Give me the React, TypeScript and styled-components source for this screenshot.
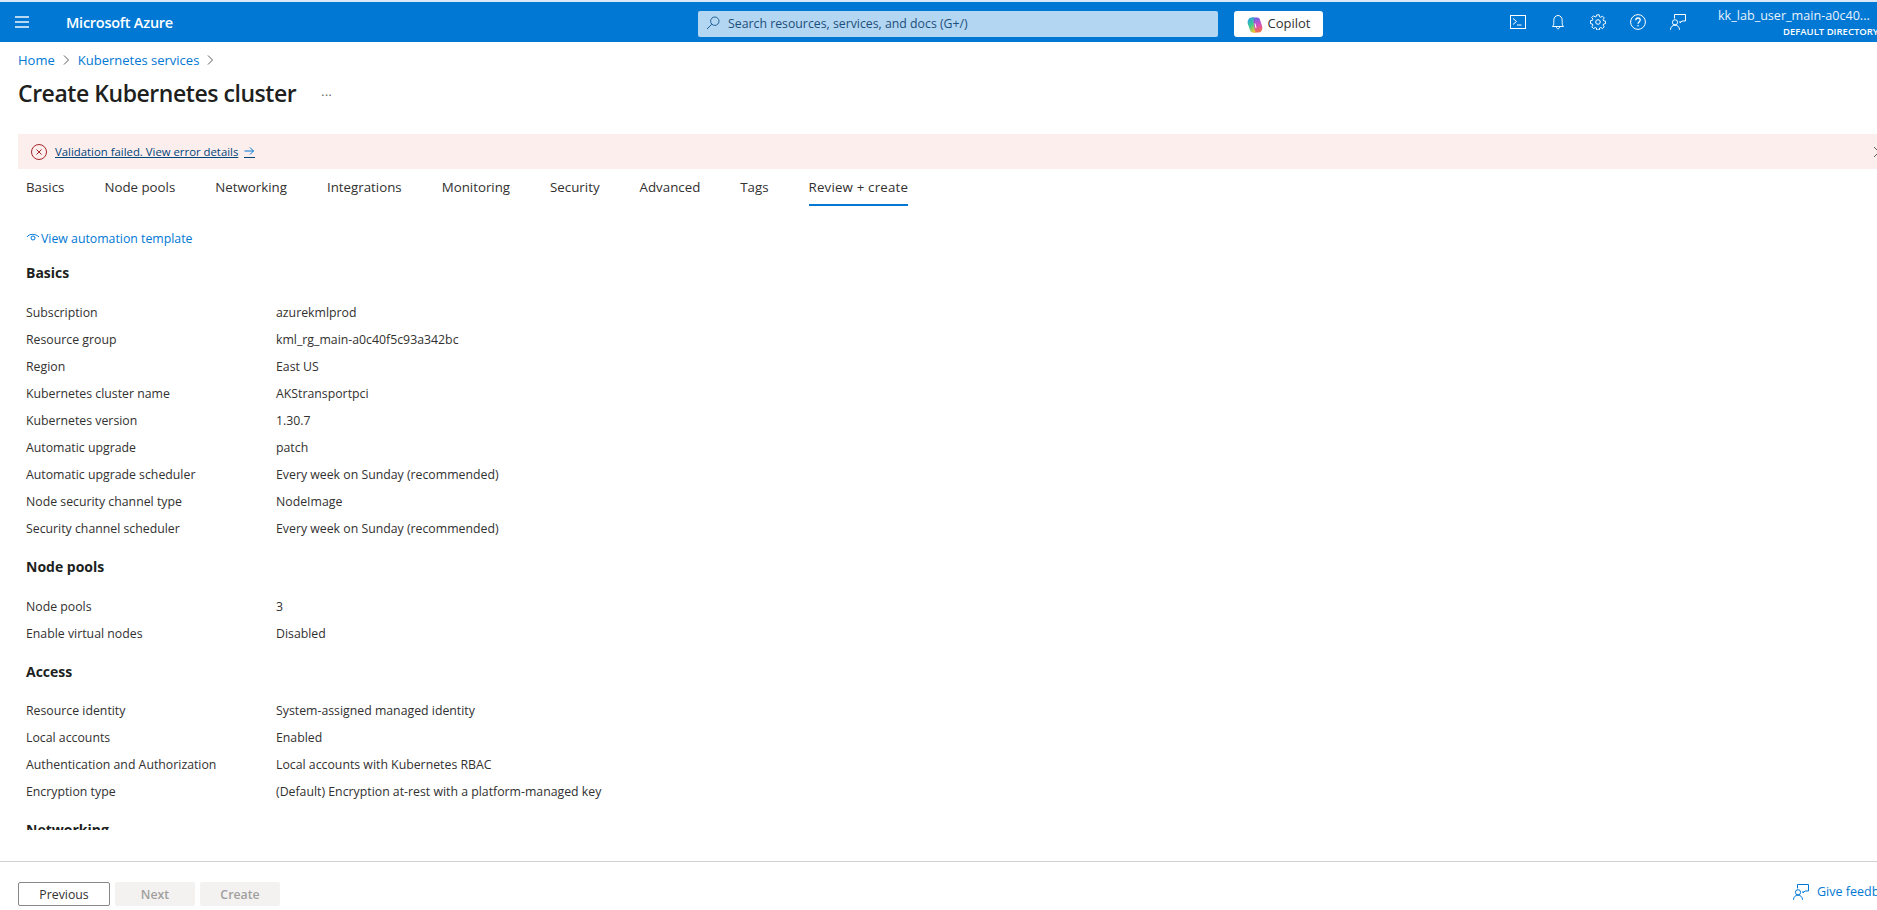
import React from "react";
import styled, { createGlobalStyle } from "styled-components";

const Global = createGlobalStyle`
  html, body { margin: 0; padding: 0; height: 910px; overflow: hidden; background: #fff; }
  body { font-family: "Open Sans", "Noto Sans", sans-serif; color: #323130; font-size: 12.3px; }
  a { text-decoration: none; }
`;

const Page = styled.div`
  width: 1900px;
  height: 910px;
  display: flex;
  flex-direction: column;
  overflow: hidden;
  border-top: 2px solid #dbe9f6;
  box-sizing: border-box;
`;

const TopBar = styled.header`
  height: 40px;
  flex: none;
  background: #0078d4;
  display: flex;
  align-items: center;
  color: #fff;
`;
const MenuButton = styled.div`
  width: 14px;
  margin-left: 15px;
  display: flex;
  flex-direction: column;
  gap: 3px;
  & > i { display: block; height: 2px; background: #b7d8f3; }
`;
const Brand = styled.div`
  margin-left: 37px;
  width: 632px;
  font-size: 14.5px;
  font-weight: 600;
  letter-spacing: -0.25px;
`;
const SearchBox = styled.div`
  width: 520px;
  height: 26px;
  margin-top: 4px;
  padding: 0 0 2px 8px;
  border-radius: 2px;
  background: #b3d6f2;
  display: flex;
  align-items: center;
  gap: 8px;
  box-sizing: border-box;
  color: #1d4f7c;
  font-size: 12.3px;
`;
const CopilotButton = styled.div`
  width: 89px;
  height: 26px;
  margin: 4px 0 0 16px;
  padding-bottom: 2px;
  box-sizing: border-box;
  border-radius: 3px;
  background: #fff;
  color: #323130;
  display: flex;
  align-items: center;
  justify-content: center;
  gap: 5px;
  font-size: 13px;
  font-weight: 500;
`;
const CopilotIcon = styled.svg`
  margin-top: 3px;
`;
const IconRow = styled.div`
  margin-left: 187px;
  display: flex;
  gap: 24px;
  align-items: center;
`;
const Account = styled.div`
  position: relative;
  margin-left: 32px;
  width: 170px;
  height: 40px;
`;
const AccountName = styled.div`
  position: absolute;
  left: 0;
  top: 5px;
  font-size: 12.6px;
  color: #e8f3fc;
  white-space: nowrap;
`;
const AccountDir = styled.div`
  position: absolute;
  left: 65px;
  top: 23px;
  font-size: 9.5px;
  font-weight: 600;
  white-space: nowrap;
`;

const Breadcrumb = styled.nav`
  margin: 10px 0 0 18px;
  height: 16px;
  display: flex;
  align-items: center;
  gap: 8px;
  font-size: 13px;
`;
const Crumb = styled.a`
  color: #0078d4;
`;
const TitleRow = styled.div`
  margin: 7px 0 0 18px;
  height: 36px;
  display: flex;
  align-items: center;
  position: relative;
`;
const Title = styled.h1`
  margin: 0;
  font-size: 23px;
  font-weight: 600;
  color: #201f1e;
  letter-spacing: -0.45px;
`;
const More = styled.span`
  margin-left: 25px;
  font-size: 12px;
  color: #605e5c;
  letter-spacing: 0.5px;
  position: relative;
  top: -2px;
`;
const EdgeMark = styled.svg`
  position: absolute;
  left: 1858px;
  top: 10px;
`;
const Banner = styled.div`
  margin: 23px 0 0 18px;
  height: 35px;
  flex: none;
  background: #fdeeee;
  display: flex;
  align-items: center;
  gap: 8px;
  padding-left: 13px;
  position: relative;
`;
const BannerLink = styled.a`
  color: #004578;
  text-decoration: underline;
  font-size: 11.35px;
  display: flex;
  align-items: center;
  gap: 6px;
`;
const BannerClose = styled.svg`
  position: absolute;
  left: 1855px;
  top: 12px;
`;
const Tabs = styled.div`
  margin: 0 0 0 26px;
  height: 37px;
  flex: none;
  display: flex;
  gap: 40px;
`;
const Tab = styled.div<{ $active?: boolean }>`
  height: 37px;
  box-sizing: border-box;
  padding-top: 9px;
  font-size: 13.3px;
  white-space: nowrap;
  font-weight: ${(p) => (p.$active ? 500 : 400)};
  letter-spacing: ${(p) => (p.$active ? "0.18px" : "normal")};
  color: #323130;
  border-bottom: 2px solid ${(p) => (p.$active ? "#0078d4" : "transparent")};
`;
const Body = styled.main`
  height: 624px;
  flex: none;
  overflow: hidden;
  padding: 23px 0 0 26px;
  box-sizing: border-box;
`;
const TemplateLink = styled.a`
  color: #0078d4;
  font-size: 12.3px;
  display: flex;
  align-items: center;
  gap: 1px;
  height: 18px;
  margin-bottom: 17px;
`;
const Heading = styled.h2`
  margin: 0;
  height: 18px;
  line-height: 18px;
  font-size: 14px;
  font-weight: 700;
  color: #201f1e;
`;
const Section = styled.section`
  margin-bottom: 16px;
`;
const Rows = styled.dl`
  margin: 16.8px 0 0;
  display: grid;
  grid-template-columns: 250px 1fr;
  grid-auto-rows: 27px;
  align-items: center;
  font-size: 12.3px;
  & > dt, & > dd { margin: 0; }
`;
const Footer = styled.footer`
  flex: 1;
  margin-top: 31px;
  border-top: 1px solid #d2d0ce;
  display: flex;
  align-items: flex-start;
  padding: 20px 0 0 18px;
  gap: 5px;
  position: relative;
`;
const Button = styled.div<{ $primary?: boolean }>`
  width: ${(p) => (p.$primary ? 92 : 80)}px;
  height: 24px;
  box-sizing: border-box;
  border-radius: 2px;
  display: flex;
  align-items: center;
  justify-content: center;
  font-size: 12.3px;
  font-weight: ${(p) => (p.$primary ? 500 : 600)};
  color: ${(p) => (p.$primary ? "#323130" : "#a19f9d")};
  background: ${(p) => (p.$primary ? "#fff" : "#f3f2f1")};
  border: ${(p) => (p.$primary ? "1px solid #8a8886" : "none")};
`;
const Feedback = styled.a`
  position: absolute;
  left: 1793px;
  top: 21px;
  color: #0078d4;
  display: flex;
  align-items: center;
  gap: 8px;
  font-size: 12.5px;
  white-space: nowrap;
`;

const FeedbackIcon = ({ color, size = 16 }: { color: string; size?: number }) => (
  <svg width={size} height={size} viewBox="0 0 16 16" fill="none" stroke={color} strokeWidth="1">
    <path d="M4.5 4.5V.5h11v6.5h-3.5l-2 2V7" />
    <circle cx="5" cy="8.3" r="2.6" />
    <path d="M.5 15.8c0-3 2-4.6 4.5-4.6s4.5 1.6 4.5 4.6" />
  </svg>
);

const sections = [
  ["Basics", [
    ["Subscription", "azurekmlprod"],
    ["Resource group", "kml_rg_main-a0c40f5c93a342bc"],
    ["Region", "East US"],
    ["Kubernetes cluster name", "AKStransportpci"],
    ["Kubernetes version", "1.30.7"],
    ["Automatic upgrade", "patch"],
    ["Automatic upgrade scheduler", "Every week on Sunday (recommended)"],
    ["Node security channel type", "NodeImage"],
    ["Security channel scheduler", "Every week on Sunday (recommended)"],
  ]],
  ["Node pools", [
    ["Node pools", "3"],
    ["Enable virtual nodes", "Disabled"],
  ]],
  ["Access", [
    ["Resource identity", "System-assigned managed identity"],
    ["Local accounts", "Enabled"],
    ["Authentication and Authorization", "Local accounts with Kubernetes RBAC"],
    ["Encryption type", "(Default) Encryption at-rest with a platform-managed key"],
  ]],
  ["Networking", []],
] as [string, string[][]][];

const tabs = ["Basics", "Node pools", "Networking", "Integrations", "Monitoring", "Security", "Advanced", "Tags"];

const Chevron = () => (
  <svg width="7" height="10" viewBox="0 0 7 10" fill="none" stroke="#605e5c" strokeWidth="1">
    <path d="M1 .5 5.500 5 1 9.500" />
  </svg>
);

export default function App() {
  return (
    <Page>
      <Global />
      <TopBar>
        <MenuButton><i /><i /><i /></MenuButton>
        <Brand>Microsoft Azure</Brand>
        <SearchBox>
          <svg width="14" height="14" viewBox="0 0 14 14" fill="none" stroke="#1d5f96" strokeWidth="1">
            <circle cx="8.800" cy="5.200" r="4.200" />
            <path d="M5.800 8.200 1 13" />
          </svg>
          Search resources, services, and docs (G+/)
        </SearchBox>
        <CopilotButton>
          <CopilotIcon width="16" height="16" viewBox="0 0 16 16">
            <defs>
              <linearGradient id="cpA" x1="0.2" y1="0" x2="0.7" y2="1">
                <stop offset="0" stopColor="#2b9fe6" />
                <stop offset="0.5" stopColor="#3ecb8f" />
                <stop offset="1" stopColor="#f6c92e" />
              </linearGradient>
              <linearGradient id="cpB" x1="0.4" y1="0" x2="0.6" y2="1">
                <stop offset="0" stopColor="#6a63e6" />
                <stop offset="0.5" stopColor="#d24fc4" />
                <stop offset="1" stopColor="#f4743f" />
              </linearGradient>
            </defs>
            <path d="M5 .6h5.100c1.500 0 2.400.9 2.900 2.100l2.100 6.200c.9 3-.8 6.500-3.600 6.500H6z" fill="url(#cpB)" />
            <path d="M9 15.400H5.900c-1.500 0-2.400-.9-2.900-2.100L.9 7.100C0 4.100 1.700.6 4.500.6h2.900C6.500 2 6.300 3.500 6.600 5.100l.9 6.700c.2 1.600.6 2.800 1.500 3.600z" fill="url(#cpA)" />
            <path d="M8 6.500 9 11" stroke="#fff" strokeWidth="1" fill="none" />
          </CopilotIcon>
          Copilot
        </CopilotButton>
        <IconRow>
          <svg width="16" height="16" viewBox="0 0 16 16" fill="none" stroke="#fff" strokeWidth="1">
            <rect x=".5" y="1.500" width="15" height="13" />
            <path d="M3 4.500 6.500 7.500 3 10.500M7 11h4.500" />
          </svg>
          <svg width="16" height="16" viewBox="0 0 16 16" fill="none" stroke="#fff" strokeWidth="1">
            <path d="M2.500 12.500c1-1 1.300-2 1.300-4V6.500C3.800 3.600 5.500 1.500 8 1.500s4.200 2.100 4.200 5v2c0 2 .3 3 1.300 4z" />
            <path d="M6.500 13c0 1 .6 1.800 1.500 1.800S9.500 14 9.500 13" />
          </svg>
          <svg width="16" height="16" viewBox="0 0 16 16" fill="none" stroke="#fff" strokeWidth="1">
            <circle cx="8" cy="8" r="2.300" />
            <path d="M6.800.8h2.400l.4 2 1.200.5 1.700-1.100 1.700 1.700-1.100 1.700.5 1.200 2 .4v2.400l-2 .4-.5 1.200 1.100 1.700-1.700 1.700-1.700-1.100-1.200.5-.4 2H6.800l-.4-2-1.200-.5-1.700 1.100-1.700-1.700 1.100-1.700-.5-1.200-2-.4V6.800l2-.4.500-1.200-1.100-1.700 1.700-1.700 1.700 1.100 1.200-.5z" />
          </svg>
          <svg width="16" height="16" viewBox="0 0 16 16" fill="none" stroke="#fff" strokeWidth="1">
            <circle cx="8" cy="8" r="7.400" />
            <path d="M5.800 6.200C5.800 4.900 6.800 4 8 4s2.200.9 2.200 2.100c0 1.800-2.200 1.900-2.200 3.700" strokeWidth="1.300" />
            <circle cx="8" cy="11.800" r=".8" fill="#fff" stroke="none" />
          </svg>
          <FeedbackIcon color="#fff" />
        </IconRow>
        <Account>
          <AccountName>kk_lab_user_main-a0c40...</AccountName>
          <AccountDir>DEFAULT DIRECTORY</AccountDir>
        </Account>
      </TopBar>

      <Breadcrumb>
        <Crumb>Home</Crumb>
        <Chevron />
        <Crumb>Kubernetes services</Crumb>
        <Chevron />
      </Breadcrumb>
      <TitleRow>
        <Title>Create Kubernetes cluster</Title>
        <More>...</More>
        <EdgeMark width="12" height="14" viewBox="0 0 12 14" fill="none" stroke="#605e5c">
          <path d="M1 1l6 6-6 6" />
        </EdgeMark>
      </TitleRow>
      <Banner>
        <svg width="16" height="16" viewBox="0 0 16 16" fill="none" stroke="#a4262c" strokeWidth="1">
          <circle cx="8" cy="8" r="7.500" />
          <path d="M5.500 5.500l5 5M10.500 5.500l-5 5" />
        </svg>
        <BannerLink>
          Validation failed. View error details
          <svg width="11" height="13" viewBox="0 0 11 13" fill="none" stroke="#0078d4" strokeWidth="1">
            <path d="M.5 6h9M6 2.500 9.500 6 6 9.500" />
            <path d="M0 12.500h11" stroke="#004578" />
          </svg>
        </BannerLink>
        <BannerClose width="12" height="12" viewBox="0 0 12 12" fill="none" stroke="#605e5c">
          <path d="M1 1l10 10M11 1 1 11" />
        </BannerClose>
      </Banner>
      <Tabs>
        {tabs.map((t) => <Tab key={t}>{t}</Tab>)}
        <Tab $active>Review + create</Tab>
      </Tabs>
      <Body>
        <TemplateLink>
          <svg width="14" height="12" viewBox="0 0 14 12" fill="none" stroke="#0078d4" strokeWidth="1">
            <path d="M1 5C3 1.500 10 1.500 13 5" />
            <circle cx="7" cy="6" r="2" />
          </svg>
          View automation template
        </TemplateLink>
        {sections.map(([name, rows]) => (
          <Section key={name}>
            <Heading>{name}</Heading>
            {rows.length > 0 && (
              <Rows>
                {rows.map(([k, v]) => (
                  <React.Fragment key={k}>
                    <dt>{k}</dt>
                    <dd>{v}</dd>
                  </React.Fragment>
                ))}
              </Rows>
            )}
          </Section>
        ))}
      </Body>
      <Footer>
        <Button $primary>Previous</Button>
        <Button>Next</Button>
        <Button>Create</Button>
        <Feedback>
          <FeedbackIcon color="#0078d4" />
          Give feedback
        </Feedback>
      </Footer>
    </Page>
  );
}
